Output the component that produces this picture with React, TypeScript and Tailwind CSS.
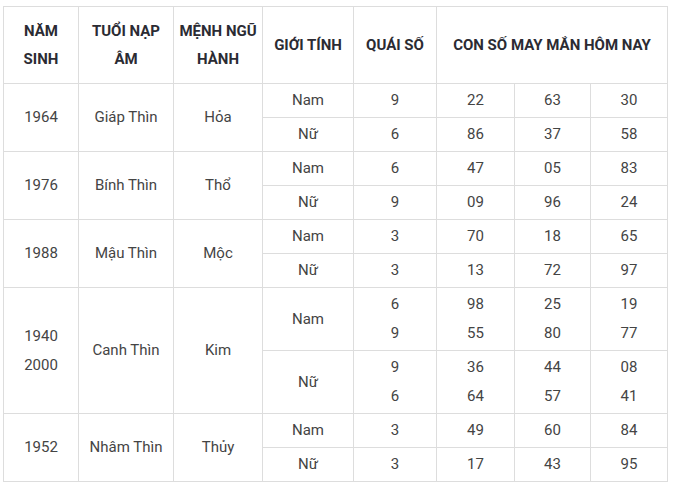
import React from "react";

type Sub = { gender: string; quai: string[]; nums: string[][] };
type Row = { years: string[]; tuoi: string; menh: string; subs: Sub[] };

const rows: Row[] = [
  {
    years: ["1964"],
    tuoi: "Giáp Thìn",
    menh: "Hỏa",
    subs: [
      { gender: "Nam", quai: ["9"], nums: [["22", "63", "30"]] },
      { gender: "Nữ", quai: ["6"], nums: [["86", "37", "58"]] },
    ],
  },
  {
    years: ["1976"],
    tuoi: "Bính Thìn",
    menh: "Thổ",
    subs: [
      { gender: "Nam", quai: ["6"], nums: [["47", "05", "83"]] },
      { gender: "Nữ", quai: ["9"], nums: [["09", "96", "24"]] },
    ],
  },
  {
    years: ["1988"],
    tuoi: "Mậu Thìn",
    menh: "Mộc",
    subs: [
      { gender: "Nam", quai: ["3"], nums: [["70", "18", "65"]] },
      { gender: "Nữ", quai: ["3"], nums: [["13", "72", "97"]] },
    ],
  },
  {
    years: ["1940", "2000"],
    tuoi: "Canh Thìn",
    menh: "Kim",
    subs: [
      {
        gender: "Nam",
        quai: ["6", "9"],
        nums: [
          ["98", "25", "19"],
          ["55", "80", "77"],
        ],
      },
      {
        gender: "Nữ",
        quai: ["9", "6"],
        nums: [
          ["36", "44", "08"],
          ["64", "57", "41"],
        ],
      },
    ],
  },
  {
    years: ["1952"],
    tuoi: "Nhâm Thìn",
    menh: "Thủy",
    subs: [
      { gender: "Nam", quai: ["3"], nums: [["49", "60", "84"]] },
      { gender: "Nữ", quai: ["3"], nums: [["17", "43", "95"]] },
    ],
  },
];

const td = "border border-[#dddddd] text-center align-middle p-0";

function Lines({ items }: { items: string[] }) {
  return (
    <>
      {items.map((t, i) => (
        <div key={i}>{t}</div>
      ))}
    </>
  );
}

export default function App() {
  return (
    <div className="bg-white pl-[3px] pt-[6px] font-['Roboto',sans-serif]">
      <table className="table-fixed border-collapse w-[664px] text-[15px] leading-[29px] text-[#444444]">
        <colgroup>
          <col className="w-[75px]" />
          <col className="w-[95px]" />
          <col className="w-[89px]" />
          <col className="w-[91px]" />
          <col className="w-[83px]" />
          <col className="w-[78px]" />
          <col className="w-[76px]" />
          <col className="w-[77px]" />
        </colgroup>
        <thead>
          <tr className="h-[77px] font-bold text-[#2b2b33] text-[15px] leading-[28px]">
            <th className={td}>
              NĂM
              <br />
              SINH
            </th>
            <th className={td}>
              TUỔI NẠP
              <br />
              ÂM
            </th>
            <th className={td}>
              MỆNH NGŨ
              <br />
              HÀNH
            </th>
            <th className={td}>GIỚI TÍNH</th>
            <th className={td}>QUÁI SỐ</th>
            <th className={td} colSpan={3}>
              CON SỐ MAY MẮN HÔM NAY
            </th>
          </tr>
        </thead>
        <tbody>
          {rows.map((r) =>
            r.subs.map((s, si) => {
              const tall = s.quai.length > 1;
              return (
                <tr key={r.tuoi + si} className={tall ? "h-[63px]" : "h-[34px]"}>
                  {si === 0 && (
                    <>
                      <td className={td} rowSpan={2}>
                        <Lines items={r.years} />
                      </td>
                      <td className={td} rowSpan={2}>
                        {r.tuoi}
                      </td>
                      <td className={td} rowSpan={2}>
                        {r.menh}
                      </td>
                    </>
                  )}
                  <td className={td}>{s.gender}</td>
                  <td className={td}>
                    <Lines items={s.quai} />
                  </td>
                  {[0, 1, 2].map((c) => (
                    <td key={c} className={td}>
                      <Lines items={s.nums.map((n) => n[c])} />
                    </td>
                  ))}
                </tr>
              );
            })
          )}
        </tbody>
      </table>
    </div>
  );
}
